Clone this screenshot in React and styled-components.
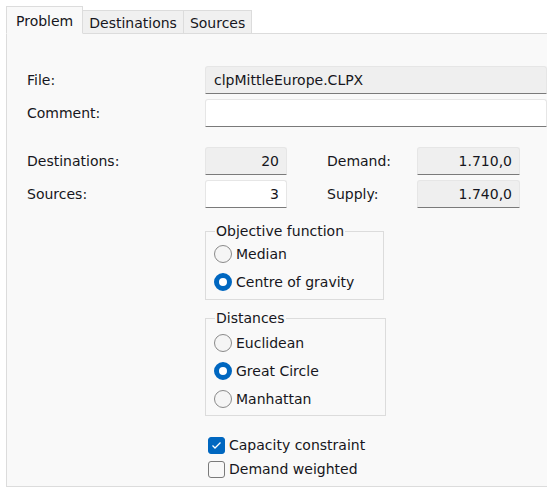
import React from "react";
import styled, { createGlobalStyle } from "styled-components";

const GlobalStyle = createGlobalStyle`
  html, body {
    margin: 0;
    padding: 0;
    background: #ffffff;
  }
  body {
    font-family: "DejaVu Sans", "Noto Sans", sans-serif;
    font-size: 14px;
    color: #161620;
  }
`;

const Window = styled.div`
  width: 550px;
  height: 489px;
  overflow: hidden;
  display: flex;
  flex-direction: column;
`;

const TabBar = styled.div`
  display: flex;
  align-items: flex-end;
  height: 33px;
  padding-left: 6px;
`;

const Tab = styled.div`
  height: ${p => (p.active ? "28px" : "23px")};
  display: flex;
  align-items: center;
  padding: ${p => (p.active ? "1px 9px 0 9px" : "1px 6px 0 6px")};
  box-sizing: border-box;
  background: ${p => (p.active ? "#f9f9f9" : "#f0f0f0")};
  border: 1px solid #dcdcdc;
  border-bottom: ${p => (p.active ? "1px solid #f9f9f9" : "none")};
  margin-bottom: ${p => (p.active ? "-1px" : "0")};
  margin-left: ${p => (p.active ? "0" : "-1px")};
  position: relative;
  z-index: ${p => (p.active ? 1 : 0)};
`;

const Panel = styled.div`
  margin-left: 6px;
  width: 541px;
  flex: 1;
  margin-bottom: 2px;
  background: #f9f9f9;
  border: 1px solid #dcdcdc;
  border-right: none;
  padding: 32px 0 0 20px;
  box-sizing: border-box;
`;

const FieldRow = styled.div`
  display: grid;
  grid-template-columns: 178px 1fr;
  align-items: center;
  height: 28px;
  margin-bottom: ${p => p.gap || 0}px;
`;

const NumberRow = styled.div`
  display: grid;
  grid-template-columns: 178px 82px 40px 90px 103px;
  align-items: center;
  height: 28px;
  margin-bottom: ${p => p.gap || 0}px;
`;

const Label = styled.span`
  white-space: nowrap;
`;

const Field = styled.div`
  height: 28px;
  box-sizing: border-box;
  display: flex;
  align-items: center;
  justify-content: ${p => (p.right ? "flex-end" : "flex-start")};
  padding: 0 7px 0 8px;
  background: ${p => (p.readOnly ? "#efefef" : "#ffffff")};
  border: 1px solid #e6e6e6;
  border-bottom: 1px solid #7a7a7a;
  border-radius: 3px 3px 0 0;
`;

const Column = styled.div`
  margin-left: 178px;
  display: flex;
  flex-direction: column;
`;

const Group = styled.fieldset`
  margin: 0;
  padding: ${p => p.top || 0}px 0 ${p => p.bottom ?? 3}px 8px;
  width: ${p => p.width}px;
  box-sizing: border-box;
  border: 1px solid #dcdcdc;
  margin-bottom: ${p => p.gap || 0}px;
`;

const Legend = styled.legend`
  padding: 0 1px;
  margin-left: 1px;
  line-height: 18px;
`;

const OptionRow = styled.label`
  display: flex;
  align-items: center;
  gap: 4px;
  height: 28px;
`;

const RadioDot = styled.span`
  width: 18px;
  height: 18px;
  box-sizing: border-box;
  border-radius: 50%;
  border: ${p => (p.checked ? "5px solid #0067c0" : "1px solid #8a8a8a")};
  background: ${p => (p.checked ? "#ffffff" : "#f5f5f5")};
`;

const CheckBox = styled.span`
  width: 17px;
  height: 17px;
  box-sizing: border-box;
  border-radius: 3px;
  border: 1px solid ${p => (p.checked ? "#0067c0" : "#7a7a7a")};
  background: ${p => (p.checked ? "#0067c0" : "#f8f8f8")};
  display: flex;
  align-items: center;
  justify-content: center;
`;

const CheckRow = styled.label`
  display: flex;
  align-items: center;
  gap: 4px;
  height: 24px;
  margin-left: 3px;
`;

const Radio = ({ checked, children }) => (
  <OptionRow>
    <RadioDot checked={checked} />
    {children}
  </OptionRow>
);

const Check = ({ checked, children }) => (
  <CheckRow>
    <CheckBox checked={checked}>
      {checked && (
        <svg width="11" height="9" viewBox="0 0 11 9">
          <path d="M1.5 4.5 L4 7 L9.5 1.5" fill="none" stroke="#ffffff" strokeWidth="1.3" />
        </svg>
      )}
    </CheckBox>
    {children}
  </CheckRow>
);

export default function App() {
  return (
    <Window>
      <GlobalStyle />
      <TabBar>
        <Tab active>Problem</Tab>
        <Tab>Destinations</Tab>
        <Tab>Sources</Tab>
      </TabBar>
      <Panel>
        <FieldRow gap={5}>
          <Label>File:</Label>
          <Field readOnly>clpMittleEurope.CLPX</Field>
        </FieldRow>
        <FieldRow gap={20}>
          <Label>Comment:</Label>
          <Field />
        </FieldRow>
        <NumberRow gap={5}>
          <Label>Destinations:</Label>
          <Field readOnly right>20</Field>
          <span />
          <Label>Demand:</Label>
          <Field readOnly right>1.710,0</Field>
        </NumberRow>
        <NumberRow gap={14}>
          <Label>Sources:</Label>
          <Field right>3</Field>
          <span />
          <Label>Supply:</Label>
          <Field readOnly right>1.740,0</Field>
        </NumberRow>
        <Column>
          <Group width={179} gap={9}>
            <Legend>Objective function</Legend>
            <Radio>Median</Radio>
            <Radio checked>Centre of gravity</Radio>
          </Group>
          <Group width={181} gap={17} top={2} bottom={2}>
            <Legend>Distances</Legend>
            <Radio>Euclidean</Radio>
            <Radio checked>Great Circle</Radio>
            <Radio>Manhattan</Radio>
          </Group>
          <Check checked>Capacity constraint</Check>
          <Check>Demand weighted</Check>
        </Column>
      </Panel>
    </Window>
  );
}
